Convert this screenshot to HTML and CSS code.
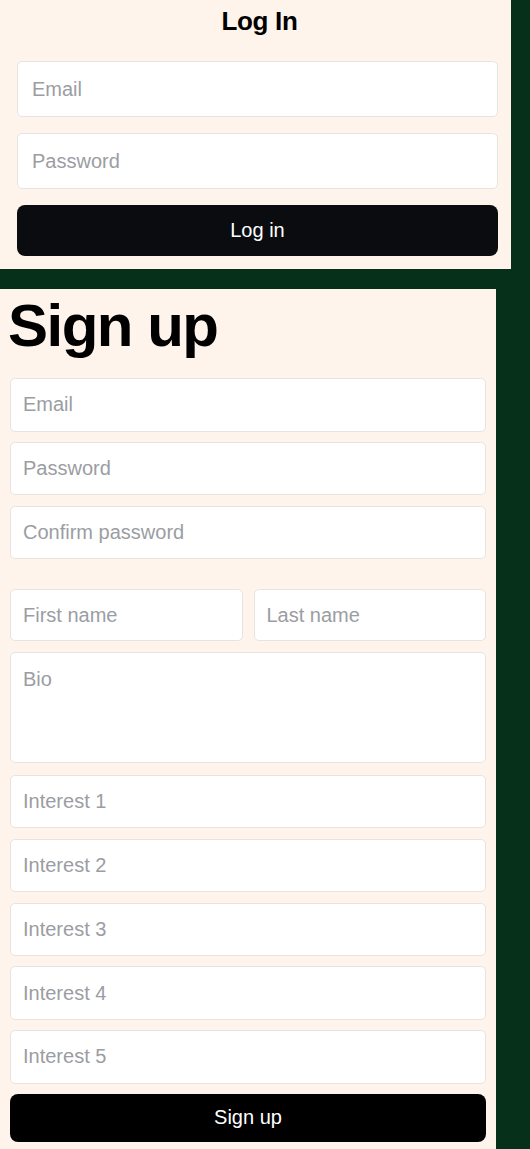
FILE: index.html
```html
<!DOCTYPE html>
<html lang="en">
<head>
<meta charset="utf-8">
<title>Log In / Sign up</title>
<link rel="stylesheet" href="styles.css">
</head>
<body>
  <section class="login">
    <h2 class="login-title">Log In</h2>
    <form class="login-form">
      <input class="field field-login" type="email" placeholder="Email">
      <input class="field field-login" type="password" placeholder="Password">
      <button class="btn btn-login" type="button">Log in</button>
    </form>
  </section>

  <section class="signup">
    <h1 class="signup-title">Sign up</h1>
    <form class="signup-form">
      <input class="field field-signup" type="email" placeholder="Email">
      <input class="field field-signup" type="password" placeholder="Password">
      <input class="field field-signup" type="password" placeholder="Confirm password">
      <div class="name-row">
        <input class="field field-signup field-name" type="text" placeholder="First name">
        <input class="field field-signup field-name" type="text" placeholder="Last name">
      </div>
      <textarea class="field field-bio" placeholder="Bio"></textarea>
      <input class="field field-signup field-interest" type="text" placeholder="Interest 1">
      <input class="field field-signup" type="text" placeholder="Interest 2">
      <input class="field field-signup" type="text" placeholder="Interest 3">
      <input class="field field-signup" type="text" placeholder="Interest 4">
      <input class="field field-signup" type="text" placeholder="Interest 5">
      <button class="btn btn-signup" type="button">Sign up</button>
    </form>
  </section>
</body>
</html>
```

FILE: styles.css
```css
html, body {
  margin: 0;
  padding: 0;
}

body {
  background: #07301b;
  font-family: "Liberation Sans", Arial, sans-serif;
  color: #000;
  min-height: 1149px;
}

/* ---------- Log In panel ---------- */
.login {
  width: 511px;
  box-sizing: border-box;
  background: #fef4eb;
  padding: 0 13px 12.5px 17px;
}

.login-title {
  margin: 0 0 18px 0;
  font-size: 26px;
  line-height: 43px;
  font-weight: 700;
  text-align: center;
  letter-spacing: -0.3px;
  padding-left: 4px;
}

.login-form {
  display: flex;
  flex-direction: column;
  gap: 16px;
  margin: 0;
}

/* ---------- shared fields ---------- */
.field {
  display: block;
  box-sizing: border-box;
  width: 100%;
  margin: 0;
  background: #fff;
  border: 1px solid #e6e4e2;
  border-radius: 5px;
  font-family: "Liberation Sans", Arial, sans-serif;
  font-size: 20px;
  color: #222;
  outline: none;
}

.field::placeholder {
  color: #9b9da3;
  opacity: 1;
}

.field-login {
  height: 56px;
  padding: 0 14px;
}

.btn {
  display: block;
  width: 100%;
  border: none;
  color: #fff;
  font-family: "Liberation Sans", Arial, sans-serif;
  font-size: 20px;
  border-radius: 8px;
  cursor: pointer;
  margin: 0;
}

.btn-login {
  height: 51px;
  background: #0b0c10;
}

/* ---------- Sign up panel ---------- */
.signup {
  width: 496px;
  box-sizing: border-box;
  background: #fef4eb;
  margin-top: 20px;
  padding: 2px 10px 8px 10px;
  min-height: 861px;
}

.signup-title {
  margin: 0 0 17.5px -2px;
  font-size: 60px;
  line-height: 70px;
  font-weight: 700;
  letter-spacing: -1.5px;
}

.signup-form {
  display: flex;
  flex-direction: column;
  gap: 10.3px;
  margin: 0;
}

.field-signup {
  height: 53.5px;
  padding: 0 12px;
}

.name-row {
  display: grid;
  grid-template-columns: 1fr 1fr;
  gap: 11px;
  margin-top: 19.5px;
}

.field-name {
  height: 52.5px;
}

.field-bio {
  height: 111px;
  padding: 15px 12px;
  resize: none;
  line-height: 23px;
}

.field-interest {
  margin-top: 2px;
}

.btn-signup {
  height: 48px;
  background: #000;
}
```
